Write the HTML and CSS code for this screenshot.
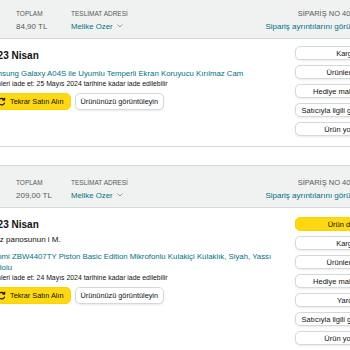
FILE: index.html
```html
<!DOCTYPE html>
<html lang="tr">
<head>
  <meta charset="UTF-8">
  <meta name="viewport" content="width=device-width, initial-scale=1.0">
  <title>Siparişlerim</title>
  <link rel="stylesheet" href="styles.css">
</head>
<body>
  <div class="orders">

    <!-- Sipariş 1 -->
    <div class="order-card">
      <div class="order-header">
        <div class="hcol hcol-date">
          <span class="hlabel">SİPARİŞ VERİLDİ</span>
          <span class="hvalue">21 Nisan 2024</span>
        </div>
        <div class="hcol hcol-total">
          <span class="hlabel">TOPLAM</span>
          <span class="hvalue">84,90 TL</span>
        </div>
        <div class="hcol">
          <span class="hlabel">TESLİMAT ADRESİ</span>
          <a class="hlink" href="#">Melike Ozer<svg class="chevron" width="6" height="4" viewBox="0 0 6 4"><polyline points="0.5,0.5 3,3 5.5,0.5" fill="none" stroke="#8d9096" stroke-width="0.9"/></svg></a>
        </div>
        <div class="hcol hcol-id">
          <span class="hlabel">SİPARİŞ NO 407-5129384-2217309</span>
          <span class="hlinks"><a class="hlink" href="#">Sipariş ayrıntılarını görüntüleyin</a><span class="sep">|</span><a class="hlink" href="#">Faturalar</a></span>
        </div>
      </div>

      <div class="order-body">
        <div class="shipment">
          <h2 class="status">Teslim edildi 23 Nisan</h2>
          <div class="item">
            <div class="item-img"></div>
            <div class="item-info">
              <a class="item-title" href="#">Samsung Galaxy A04S ile Uyumlu Temperli Ekran Koruyucu Kırılmaz Cam</a>
              <p class="return-note">Ürünleri iade et: 25 Mayıs 2024 tarihine kadar iade edilebilir</p>
              <div class="item-actions">
                <button class="btn btn-yellow">
                  <svg class="btn-icon" width="9" height="9" viewBox="0 0 10 10"><path d="M8.2 3.2A3.6 3.6 0 1 0 8.6 6.2" fill="none" stroke="#0f1111" stroke-width="1.2"/><polyline points="8.6,0.8 8.4,3.4 5.8,3.2" fill="none" stroke="#0f1111" stroke-width="1.2"/></svg>
                  Tekrar Satın Alın
                </button>
                <button class="btn">Ürününüzü görüntüleyin</button>
              </div>
            </div>
          </div>
        </div>
        <div class="actions">
          <button class="btn btn-block">Kargo takibi</button>
          <button class="btn btn-block">Ürünleri iade edin</button>
          <button class="btn btn-block">Hediye makbuzu paylaşın</button>
          <button class="btn btn-block">Satıcıyla ilgili geri bildirim bırakın</button>
          <button class="btn btn-block">Ürün yorumu yazın</button>
        </div>
      </div>
    </div>

    <!-- Sipariş 2 -->
    <div class="order-card">
      <div class="order-header">
        <div class="hcol hcol-date">
          <span class="hlabel">SİPARİŞ VERİLDİ</span>
          <span class="hvalue">20 Nisan 2024</span>
        </div>
        <div class="hcol hcol-total">
          <span class="hlabel">TOPLAM</span>
          <span class="hvalue">209,00 TL</span>
        </div>
        <div class="hcol">
          <span class="hlabel">TESLİMAT ADRESİ</span>
          <a class="hlink" href="#">Melike Ozer<svg class="chevron" width="6" height="4" viewBox="0 0 6 4"><polyline points="0.5,0.5 3,3 5.5,0.5" fill="none" stroke="#8d9096" stroke-width="0.9"/></svg></a>
        </div>
        <div class="hcol hcol-id">
          <span class="hlabel">SİPARİŞ NO 407-8830152-6619324</span>
          <span class="hlinks"><a class="hlink" href="#">Sipariş ayrıntılarını görüntüleyin</a><span class="sep">|</span><a class="hlink" href="#">Faturalar</a></span>
        </div>
      </div>

      <div class="order-body order-body-tall">
        <div class="shipment">
          <h2 class="status">Teslim edildi 23 Nisan</h2>
          <p class="status-note">Teslim: kapı Yılmaz panosunun i M.</p>
          <div class="item">
            <div class="item-img"></div>
            <div class="item-info">
              <a class="item-title" href="#">Xiaomi ZBW4407TY Piston Basic Edition Mikrofonlu Kulakiçi Kulaklık, Siyah, Yassı Kablolu</a>
              <p class="return-note">Ürünleri iade et: 24 Mayıs 2024 tarihine kadar iade edilebilir</p>
              <div class="item-actions">
                <button class="btn btn-yellow">
                  <svg class="btn-icon" width="9" height="9" viewBox="0 0 10 10"><path d="M8.2 3.2A3.6 3.6 0 1 0 8.6 6.2" fill="none" stroke="#0f1111" stroke-width="1.2"/><polyline points="8.6,0.8 8.4,3.4 5.8,3.2" fill="none" stroke="#0f1111" stroke-width="1.2"/></svg>
                  Tekrar Satın Alın
                </button>
                <button class="btn">Ürününüzü görüntüleyin</button>
              </div>
            </div>
          </div>
        </div>
        <div class="actions">
          <button class="btn btn-block btn-yellow">Ürün desteği alın</button>
          <button class="btn btn-block">Kargo takibi</button>
          <button class="btn btn-block">Ürünleri iade edin</button>
          <button class="btn btn-block">Hediye makbuzu paylaşın</button>
          <button class="btn btn-block">Yardım alın</button>
          <button class="btn btn-block">Satıcıyla ilgili geri bildirim bırakın</button>
          <button class="btn btn-block">Ürün yorumu yazın</button>
        </div>
      </div>
    </div>

  </div>
</body>
</html>
```

FILE: styles.css
```css
html, body {
  overflow: hidden;
}

body {
  margin: 0;
  font-family: 'Liberation Sans', Arial, sans-serif;
  color: #0f1111;
  background-color: #fff;
}

a {
  text-decoration: none;
}

.orders {
  margin-top: -4px;
}

.order-card {
  box-sizing: border-box;
  width: 502px;
  margin-left: -75px;
  margin-bottom: 18px;
  border: 1px solid #d5d9d9;
  border-radius: 8px;
}

/* intestazione grigia */
.order-header {
  display: flex;
  padding: 12px 8px 5px 9px;
  background-color: #f0f2f2;
  border-bottom: 1px solid #d5d9d9;
  border-radius: 8px 8px 0 0;
}

.hcol {
  display: flex;
  flex-direction: column;
}

.hcol-date {
  width: 81px;
}

.hcol-total {
  width: 55px;
}

.hcol-id {
  margin-left: auto;
  align-items: flex-end;
}

.hlabel {
  font-size: 6.5px;
  line-height: 10px;
  color: #565959;
  margin-bottom: 2px;
}

.hcol-id .hlabel {
  font-size: 7.5px;
}

.hvalue {
  font-size: 8px;
  line-height: 12px;
  color: #565959;
}

.hlink {
  font-size: 7.8px;
  line-height: 12px;
  color: #007185;
}

.chevron {
  margin-left: 4px;
  vertical-align: 1px;
}

.hlinks {
  font-size: 8px;
  line-height: 12px;
  white-space: nowrap;
}

.hlinks .hlink {
  font-size: 8px;
}

.sep {
  color: #d5d9d9;
  margin: 0 3px;
}

/* corpo */
.order-body {
  display: flex;
  gap: 15px;
  padding: 7px 9px 10px 9px;
}

.order-body-tall .actions {
  padding-top: 2px;
}

.shipment {
  flex: 1;
  min-width: 0;
  padding-top: 4px;
}

.status {
  margin: 0 0 4px 0;
  font-size: 10px;
  line-height: 12px;
  font-weight: bold;
  white-space: nowrap;
}

.status-note {
  margin: 0;
  font-size: 8px;
  line-height: 10px;
  white-space: nowrap;
}

.item {
  display: flex;
  gap: 12px;
  margin-top: 6px;
}

.item-img {
  flex: none;
  width: 39px;
  height: 39px;
  background-color: #f7f8f8;
}

.item-info {
  flex: 1;
  min-width: 0;
}

.item-title {
  display: block;
  font-size: 7.8px;
  line-height: 11px;
  color: #007185;
}

.return-note {
  margin: 1px 0 0 0;
  font-size: 6.9px;
  line-height: 8px;
  color: #0f1111;
  white-space: nowrap;
}

.item-actions {
  display: flex;
  gap: 4px;
  margin-top: 5px;
}

.btn {
  display: inline-flex;
  align-items: center;
  justify-content: center;
  box-sizing: border-box;
  height: 17px;
  padding: 0 5px;
  font-family: inherit;
  font-size: 7.3px;
  color: #0f1111;
  background-color: #fff;
  border: 1px solid #d5d9d9;
  border-radius: 5px;
  box-shadow: 0 1px 2px rgba(213, 217, 217, 0.5);
  white-space: nowrap;
}

.btn-yellow {
  background-color: #ffd814;
  border-color: #fcd200;
  box-shadow: none;
}

.item-actions .btn-yellow {
  padding: 0 6px 0 10px;
}

.btn-icon {
  margin-right: 4px;
}

.actions {
  flex: none;
  width: 122px;
}

.btn-block {
  display: flex;
  width: 100%;
  height: 14px;
  padding: 0 2px;
  margin-bottom: 5px;
  font-size: 7.5px;
  overflow: hidden;
}

.btn-block:last-child {
  margin-bottom: 0;
}
```
